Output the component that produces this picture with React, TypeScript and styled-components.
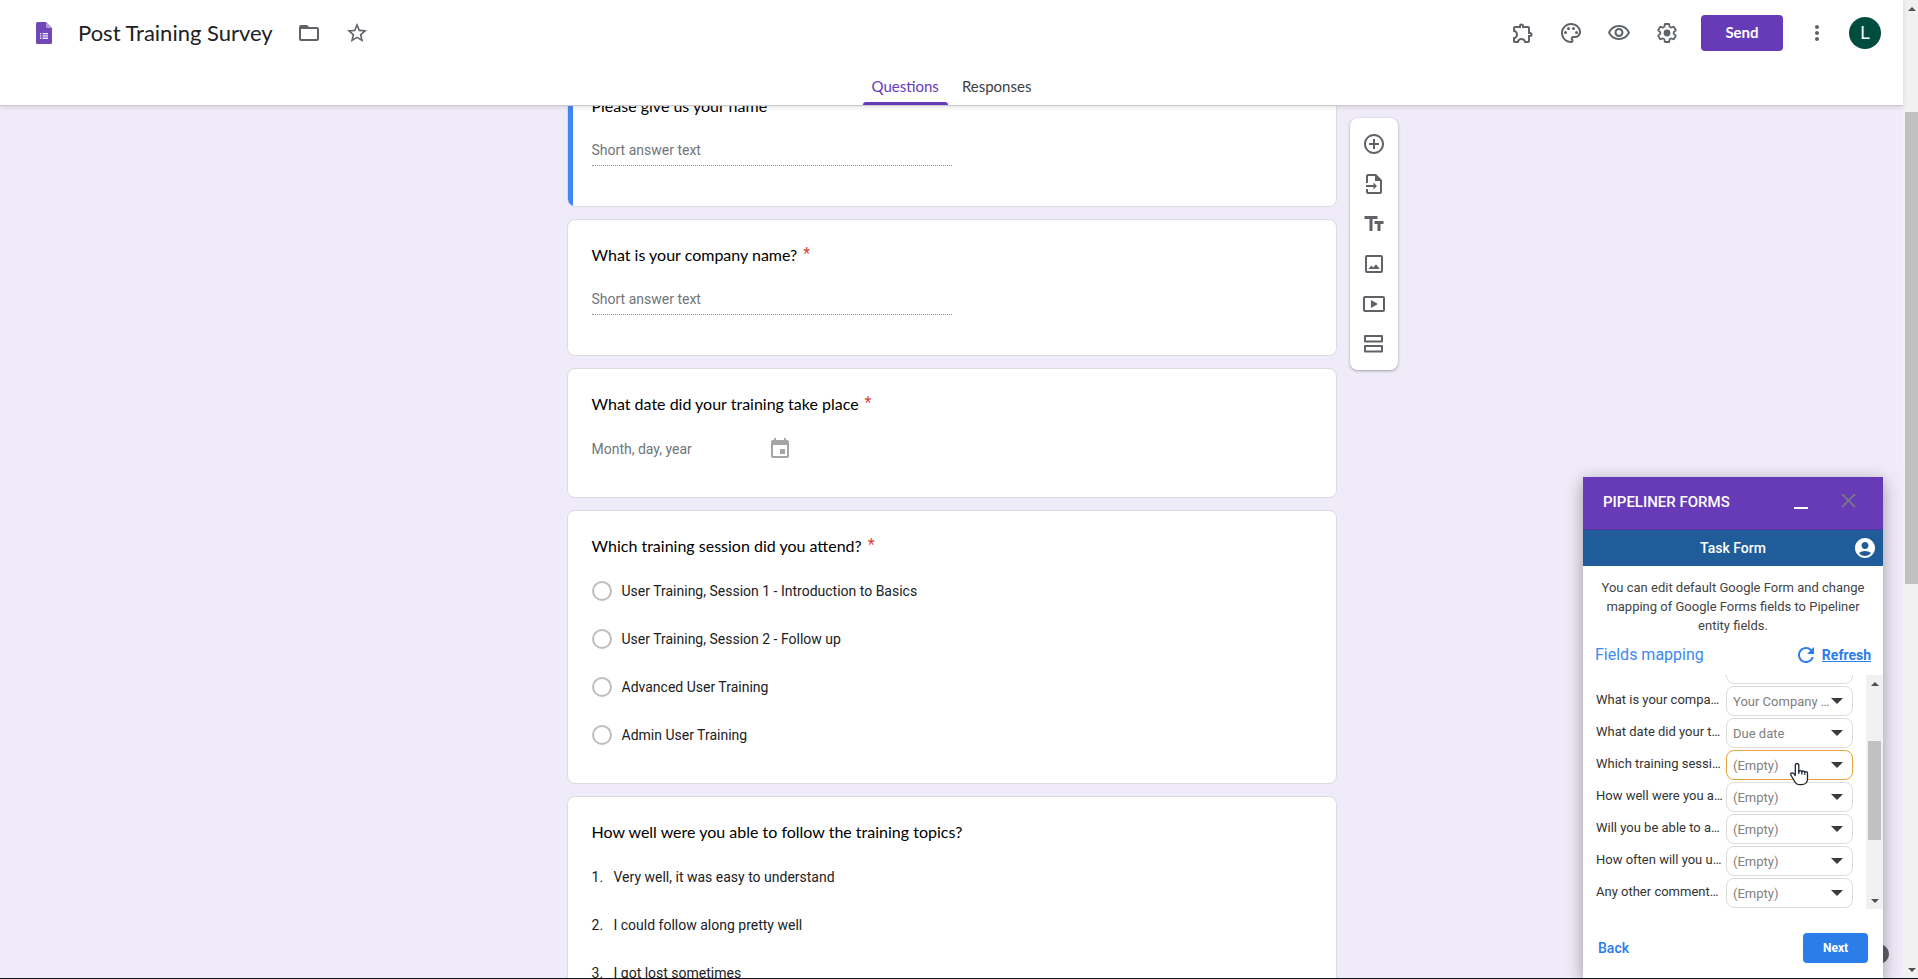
import React from 'react';
import styled, { createGlobalStyle, css } from 'styled-components';
import {
  MdAccountCircle,
  MdAddCircleOutline,
  MdEvent,
  MdFolderOpen,
  MdMoreVert,
  MdOutlineExtension,
  MdOutlinePalette,
  MdOutlineVisibility,
  MdRefresh,
  MdStarBorder,
  MdTextFields,
} from 'react-icons/md';

const display = "Lato, 'Open Sans', sans-serif";
const body = "Roboto, 'Liberation Sans', sans-serif";

const GlobalStyle = createGlobalStyle`
  *, *::before, *::after { box-sizing: border-box; }
  body { margin: 0; background: #f0ebf8; font-family: ${body}; color: #202124; }
  button, input, select { font-family: inherit; }
  h1, h2, h3, p, ol, fieldset { margin: 0; padding: 0; border: 0; }
`;

/* ---------- page shell ---------- */

const Shell = styled.div`
  position: relative;
  display: grid;
  grid-template-columns: minmax(0, 1fr) 15px;
  height: 100vh;
  overflow: hidden;
  border-bottom: 1px solid #10131c;
`;

const Page = styled.div`
  display: flex;
  flex-direction: column;
  min-height: 0;
`;

const Track = styled.div<{ $inset: number }>`
  display: flex;
  flex-direction: column;
  align-items: center;
  background: #f1f1f1;
  padding: 0 0 0 ${(p) => p.$inset}px;
`;

const Arrow = styled.span<{ $down?: boolean }>`
  display: flex;
  align-items: center;
  justify-content: center;
  height: 17px;
  &::before {
    content: '';
    border: 4px solid transparent;
    border-top-width: ${(p) => (p.$down ? 4 : 0)}px;
    border-bottom-width: ${(p) => (p.$down ? 0 : 4)}px;
    ${(p) => (p.$down ? 'border-top-color' : 'border-bottom-color')}: #505050;
  }
`;

const Space = styled.span<{ $grow: number }>`
  flex: ${(p) => p.$grow} 1 0;
`;

const Thumb = styled.span<{ $grow: number }>`
  flex: ${(p) => p.$grow} 1 0;
  width: 13px;
  background: #c1c1c1;
`;

/* ---------- header ---------- */

const Header = styled.header`
  position: relative;
  z-index: 2;
  background: #fff;
  border-bottom: 1px solid #c9c8cf;
  box-shadow: 0 1px 5px rgba(60, 64, 67, 0.16);
`;

const TopRow = styled.div`
  display: flex;
  align-items: center;
  height: 66px;
  padding: 0 22px 0 36px;
`;

const Title = styled.h1`
  font: 400 22px/28px ${display};
  padding: 0 9px 0 26px;
  min-width: 233px;
  white-space: nowrap;
`;

const IconButton = styled.button`
  display: flex;
  align-items: center;
  justify-content: center;
  width: 48px;
  height: 48px;
  padding: 0;
  border: 0;
  background: none;
  color: #5f6368;
  font-size: 24px;
`;

const Actions = styled.div`
  display: flex;
  align-items: center;
  margin-left: auto;
`;

const SendButton = styled.button`
  width: 82px;
  height: 36px;
  margin: 0 10px;
  padding: 0 0 2px;
  border: 0;
  border-radius: 4px;
  background: #673ab7;
  color: #fff;
  font: 700 15px/20px ${display};
`;

const Avatar = styled.button`
  width: 32px;
  height: 32px;
  margin-left: 8px;
  padding: 0;
  border: 0;
  border-radius: 50%;
  background: #004d40;
  color: #fff;
  font: 400 18px/32px ${body};
`;

const Tabs = styled.nav`
  display: flex;
  justify-content: center;
  gap: 5px;
  height: 39px;
`;

const Tab = styled.button<{ $active?: boolean }>`
  position: relative;
  padding: 0 9px;
  border: 0;
  background: none;
  color: ${(p) => (p.$active ? '#673ab7' : '#3c4043')};
  font: 400 15px/20px ${display};
  ${(p) =>
    p.$active &&
    css`
      &::after {
        content: '';
        position: absolute;
        left: 0;
        right: 0;
        bottom: 0;
        height: 3px;
        border-radius: 3px 3px 0 0;
        background: #673ab7;
      }
    `}
`;

/* ---------- form ---------- */

const Scroller = styled.main`
  flex: 1;
  min-height: 0;
  overflow: hidden;
`;

const Columns = styled.div`
  display: grid;
  grid-template-columns: minmax(60px, 1fr) minmax(0, 770px) minmax(60px, 1fr);
  align-items: start;
`;

const CardList = styled.div`
  grid-column: 2;
  display: flex;
  flex-direction: column;
  gap: 12px;
  margin-top: -36px;
`;

const Card = styled.section<{ $active?: boolean }>`
  position: relative;
  padding: 23px 24px 36px;
  border: 1px solid #dadce0;
  border-radius: 8px;
  background: #fff;
  overflow: hidden;
  ${(p) =>
    p.$active &&
    css`
      &::before {
        content: '';
        position: absolute;
        inset: -1px auto -1px -1px;
        width: 6px;
        background: #4285f4;
      }
    `}
`;

const Question = styled.h2`
  font: 400 16px/24px ${display};
  color: #000;
`;

const Star = styled.span`
  padding-left: 6px;
  color: #db4437;
  font: 400 16px/16px ${body};
  vertical-align: 2px;
`;

const ShortAnswer = styled.input`
  display: block;
  width: 360px;
  max-width: 100%;
  height: 28px;
  margin: 20px 0 4px;
  padding: 0 0 4px;
  border: 0;
  border-bottom: 1px dotted #8c8f93;
  background: none;
  font-size: 14px;
  &::placeholder { color: #70757a; opacity: 1; }
`;

const DateRow = styled.div`
  display: flex;
  align-items: center;
  justify-content: space-between;
  width: 200px;
  height: 24px;
  margin-top: 21px;
  svg { font-size: 24px; color: #a5a5a5; }
`;

const DateInput = styled.input`
  width: 130px;
  padding: 0;
  border: 0;
  background: none;
  font-size: 14px;
  &::placeholder { color: #70757a; opacity: 1; }
`;

const Options = styled.fieldset`
  display: flex;
  flex-direction: column;
  gap: 24px;
  padding-top: 21px;
`;

const Option = styled.label`
  display: flex;
  align-items: center;
  gap: 10px;
  height: 24px;
  font-size: 14px;
`;

const Radio = styled.input`
  appearance: none;
  width: 20px;
  height: 20px;
  margin: 0;
  border: 2px solid #bdbdbd;
  border-radius: 50%;
`;

const Ranked = styled.ol`
  display: flex;
  flex-direction: column;
  gap: 24px;
  padding-top: 21px;
  list-style: none;
  counter-reset: rank;
`;

const RankedItem = styled.li`
  display: flex;
  gap: 10px;
  font-size: 14px;
  line-height: 24px;
  counter-increment: rank;
  &::before {
    content: counter(rank) '.';
    width: 12px;
  }
`;

const Toolbar = styled.aside`
  grid-column: 3;
  justify-self: start;
  display: flex;
  flex-direction: column;
  margin: 12px 0 0 13px;
  padding: 6px 0;
  border-radius: 8px;
  background: #fff;
  box-shadow: 0 1px 3px rgba(60, 64, 67, 0.45);
`;

const ToolButton = styled(IconButton)`
  height: 40px;
`;

const Help = styled.button`
  position: absolute;
  right: 29px;
  bottom: 14px;
  width: 20px;
  height: 20px;
  padding: 0;
  border: 0;
  border-radius: 50%;
  background: #5f6368;
`;

/* ---------- add-on panel ---------- */

const Panel = styled.section`
  position: absolute;
  right: 35px;
  bottom: 0;
  z-index: 3;
  display: flex;
  flex-direction: column;
  width: 300px;
  background: #fff;
  box-shadow: 0 4px 16px rgba(0, 0, 0, 0.36);
`;

const PanelHead = styled.div`
  display: flex;
  align-items: center;
  height: 53px;
  padding: 0 26px 2px 20px;
  border-bottom: 1px solid #5a33a3;
  background: #673ab7;
  color: #fff;
`;

const PanelTitle = styled.h2`
  flex: 1;
  font: 500 15px/20px ${body};
`;

const PanelButton = styled.button`
  display: flex;
  padding: 0;
  margin-left: 33px;
  border: 0;
  background: none;
`;

const PanelSub = styled.div`
  display: grid;
  grid-template-columns: 24px 1fr 24px;
  align-items: center;
  height: 36px;
  padding: 0 6px;
  background: #1f5c99;
  color: #fff;
  font: 500 14px/20px ${body};
  text-align: center;
  span { grid-column: 2; }
  svg { font-size: 24px; }
`;

const PanelText = styled.p`
  padding: 12px 16px 0;
  color: #444;
  font-size: 13px;
  line-height: 19px;
  text-align: center;
`;

const MappingHead = styled.div`
  display: flex;
  align-items: center;
  justify-content: space-between;
  height: 40px;
  padding: 0 12px;
`;

const MappingTitle = styled.h3`
  font: 400 16px/20px ${body};
  color: #3b8af0;
`;

const RefreshLink = styled.a`
  display: flex;
  align-items: center;
  gap: 4px;
  color: #2b7de9;
  font: 700 14px/20px ${body};
  text-decoration: none;
  span { text-decoration: underline; }
  svg { font-size: 24px; }
`;

const MappingArea = styled.div`
  display: grid;
  grid-template-columns: minmax(0, 1fr) 17px;
  height: 234px;
`;

const MappingRows = styled.div`
  display: flex;
  flex-direction: column;
  justify-content: flex-end;
  padding: 0 13px;
  min-height: 0;
  overflow: hidden;
`;

const MappingRow = styled.label`
  display: grid;
  grid-template-columns: minmax(0, 1fr) 127px;
  gap: 3px;
  flex: none;
  height: 32px;
  align-items: center;
`;

const MappingLabel = styled.span`
  overflow: hidden;
  padding-bottom: 2px;
  color: #333;
  font-size: 13px;
  line-height: 20px;
  text-overflow: ellipsis;
  white-space: nowrap;
`;

const SelectBox = styled.span`
  position: relative;
  &::after {
    content: '';
    position: absolute;
    top: 12px;
    right: 10px;
    border: 6px solid transparent;
    border-top-color: #3a3a3a;
    border-bottom: 0;
    pointer-events: none;
  }
`;

const Select = styled.select<{ $hot?: boolean }>`
  appearance: none;
  display: block;
  width: 100%;
  height: 30px;
  padding: 0 22px 0 6px;
  border: 1px solid ${(p) => (p.$hot ? '#e6a23c' : '#dcdcdc')};
  border-radius: 8px;
  background: #fff;
  color: #808080;
  font-size: 13px;
  text-overflow: ellipsis;
  overflow: hidden;
  white-space: nowrap;
`;

const Pointer = styled.svg`
  position: absolute;
  left: 64px;
  top: 12px;
  z-index: 1;
`;

const PanelFoot = styled.div`
  display: flex;
  align-items: center;
  justify-content: space-between;
  padding: 24px 15px 15px;
`;

const BackButton = styled.button`
  padding: 0;
  border: 0;
  background: none;
  color: #2b7de9;
  font: 500 14px/20px ${body};
`;

const NextButton = styled.button`
  width: 65px;
  height: 30px;
  border: 0;
  border-radius: 4px;
  background: #2b7de9;
  color: #fff;
  font: 700 12px/20px ${body};
`;

/* ---------- drawings ---------- */

const FormsLogo = () => (
  <svg width="16" height="22" viewBox="0 0 16 22" aria-hidden="true">
    <path d="M1.5 0H10l6 6v14.5a1.5 1.5 0 0 1-1.5 1.5h-13A1.5 1.5 0 0 1 0 20.5v-19A1.5 1.5 0 0 1 1.5 0z" fill="#7248b9" />
    <path d="M10 0l6 6h-4.5A1.5 1.5 0 0 1 10 4.5z" fill="#b39ddb" />
    <path d="M4 11h1.3v1.3H4zM4 13.3h1.3v1.3H4zM4 15.6h1.3v1.3H4zM6.5 11H12v1.3H6.5zM6.5 13.3H12v1.3H6.5zM6.5 15.6H12v1.3H6.5z" fill="#f1ebfa" />
  </svg>
);

const Gear = () => (
  <svg width="24" height="24" viewBox="0 0 24 24" aria-hidden="true">
    <path
      d="M19.43 12.98c.04-.32.07-.64.07-.98 0-.34-.03-.66-.07-.98l2.11-1.65c.19-.15.24-.42.12-.64l-2-3.46a.5.5 0 0 0-.61-.22l-2.49 1c-.52-.4-1.08-.73-1.69-.98l-.38-2.65A.488.488 0 0 0 14 2h-4c-.25 0-.46.18-.49.42l-.38 2.65c-.61.25-1.17.59-1.69.98l-2.49-1a.566.566 0 0 0-.18-.03c-.17 0-.34.09-.43.25l-2 3.46c-.13.22-.07.49.12.64l2.11 1.65c-.04.32-.07.65-.07.98s.03.66.07.98l-2.11 1.65c-.19.15-.24.42-.12.64l2 3.46a.5.5 0 0 0 .61.22l2.49-1c.52.4 1.08.73 1.69.98l.38 2.65c.03.24.24.42.49.42h4c.25 0 .46-.18.49-.42l.38-2.65c.61-.25 1.17-.59 1.69-.98l2.49 1c.06.02.12.03.18.03.17 0 .34-.09.43-.25l2-3.46c.12-.22.07-.49-.12-.64l-2.11-1.65z"
      transform="translate(1.2 1.2) scale(0.9)"
      fill="none"
      stroke="currentColor"
      strokeWidth="2"
      strokeLinejoin="round"
    />
    <circle cx="12" cy="12" r="3.4" fill="currentColor" />
  </svg>
);

const ImportIcon = () => (
  <svg width="24" height="24" viewBox="0 0 24 24" fill="currentColor" aria-hidden="true">
    <path d="M14 2H6a2 2 0 0 0-2 2v7h2V4h7v5h5v11H6v-3H4v3a2 2 0 0 0 2 2h12a2 2 0 0 0 2-2V8z" />
    <path d="M11.5 10.5v2.5H4v2h7.5v2.5L15 14z" />
  </svg>
);

const ImageIcon = () => (
  <svg width="24" height="24" viewBox="0 0 24 24" fill="currentColor" aria-hidden="true">
    <path d="M19 3H5a2 2 0 0 0-2 2v14a2 2 0 0 0 2 2h14a2 2 0 0 0 2-2V5a2 2 0 0 0-2-2zm0 16H5V5h14z" />
    <path d="M6.5 17l2.8-3.500 2 2 2.7-3.300L17.8 17z" />
  </svg>
);

const VideoIcon = () => (
  <svg width="24" height="24" viewBox="0 0 24 24" fill="currentColor" aria-hidden="true">
    <path d="M21 4H3a2 2 0 0 0-2 2v12a2 2 0 0 0 2 2h18a2 2 0 0 0 2-2V6a2 2 0 0 0-2-2zm0 14H3V6h18z" />
    <path d="M9 8v8l7-4z" />
  </svg>
);

const SectionIcon = () => (
  <svg width="24" height="24" viewBox="0 0 24 24" fill="none" stroke="currentColor" strokeWidth="2" strokeLinejoin="round" aria-hidden="true">
    <path d="M3 4h17v5.5H3zM3 14h17v5.5H3z" />
  </svg>
);

const HandPointer = () => (
  <Pointer width="20" height="24" viewBox="0 0 20 24" aria-hidden="true">
    <path
      d="M7 1.5c-1 0-1.7.7-1.7 1.7v10.3L3.8 11.7c-.8-.9-2-1-2.7-.4-.5.5-.5 1.2-.1 1.9l3.7 6.3c1 2 2.6 3.2 5.3 3.2h1.5c3.5 0 6-2.4 6-5.8v-5.7c0-.9-.6-1.5-1.4-1.5-.7 0-1.3.5-1.3 1.2 0-1.1-.6-1.9-1.5-1.9s-1.5.6-1.5 1.4c0-1-.6-1.8-1.5-1.8s-1.5.6-1.5 1.4V3.2C8.800 2.200 8 1.500 7 1.500z"
      fill="#fff" stroke="#1d2433" strokeWidth="1.3" strokeLinejoin="round"
    />
    <path d="M8.8 9v3M11.8 10.5v2M14.8 11.5v1.5" stroke="#1d2433" strokeWidth="1.2" />
  </Pointer>
);

/* ---------- data ---------- */

const sessions = [
  'User Training, Session 1 - Introduction to Basics',
  'User Training, Session 2 - Follow up',
  'Advanced User Training',
  'Admin User Training',
];

const ranks = ['Very well, it was easy to understand', 'I could follow along pretty well', 'I got lost sometimes'];

const mappings = [
  { label: 'Please give us your name', value: '' },
  { label: 'What is your company name?', value: 'Your Company Name' },
  { label: 'What date did your training take place', value: 'Due date' },
  { label: 'Which training session did you attend?', value: '(Empty)', hot: true },
  { label: 'How well were you able to follow the training topics?', value: '(Empty)' },
  { label: 'Will you be able to apply the training?', value: '(Empty)' },
  { label: 'How often will you use the system?', value: '(Empty)' },
  { label: 'Any other comments or suggestions?', value: '(Empty)' },
];

const Required = () => <Star>*</Star>;

export default function App() {
  return (
    <Shell>
      <GlobalStyle />
      <Page>
        <Header>
          <TopRow>
            <FormsLogo />
            <Title>Post Training Survey</Title>
            <IconButton aria-label="Move to folder"><MdFolderOpen /></IconButton>
            <IconButton aria-label="Star"><MdStarBorder /></IconButton>
            <Actions>
              <IconButton aria-label="Add-ons"><MdOutlineExtension /></IconButton>
              <IconButton aria-label="Customize theme"><MdOutlinePalette /></IconButton>
              <IconButton aria-label="Preview"><MdOutlineVisibility /></IconButton>
              <IconButton aria-label="Settings"><Gear /></IconButton>
              <SendButton>Send</SendButton>
              <IconButton aria-label="More"><MdMoreVert /></IconButton>
              <Avatar>L</Avatar>
            </Actions>
          </TopRow>
          <Tabs>
            <Tab $active>Questions</Tab>
            <Tab>Responses</Tab>
          </Tabs>
        </Header>

        <Scroller>
          <Columns>
            <CardList>
              <Card $active>
                <Question>Please give us your name</Question>
                <ShortAnswer aria-label="Please give us your name" placeholder="Short answer text" />
              </Card>
              <Card>
                <Question>What is your company name?<Required /></Question>
                <ShortAnswer aria-label="What is your company name?" placeholder="Short answer text" />
              </Card>
              <Card>
                <Question>What date did your training take place<Required /></Question>
                <DateRow>
                  <DateInput aria-label="Training date" placeholder="Month, day, year" />
                  <MdEvent />
                </DateRow>
              </Card>
              <Card>
                <Question>Which training session did you attend?<Required /></Question>
                <Options aria-label="Which training session did you attend?">
                  {sessions.map((s) => (
                    <Option key={s}>
                      <Radio type="radio" name="session" />
                      {s}
                    </Option>
                  ))}
                </Options>
              </Card>
              <Card>
                <Question>How well were you able to follow the training topics?</Question>
                <Ranked>
                  {ranks.map((r) => (
                    <RankedItem key={r}>{r}</RankedItem>
                  ))}
                </Ranked>
              </Card>
            </CardList>
            <Toolbar>
              <ToolButton aria-label="Add question"><MdAddCircleOutline /></ToolButton>
              <ToolButton aria-label="Import questions"><ImportIcon /></ToolButton>
              <ToolButton aria-label="Add title and description"><MdTextFields /></ToolButton>
              <ToolButton aria-label="Add image"><ImageIcon /></ToolButton>
              <ToolButton aria-label="Add video"><VideoIcon /></ToolButton>
              <ToolButton aria-label="Add section"><SectionIcon /></ToolButton>
            </Toolbar>
          </Columns>
        </Scroller>
      </Page>

      <Track $inset={2}>
        <Arrow />
        <Space $grow={95} />
        <Thumb $grow={472} />
        <Space $grow={377} />
        <Arrow $down />
      </Track>

      <Help aria-label="Help" />

      <Panel>
        <PanelHead>
          <PanelTitle>PIPELINER FORMS</PanelTitle>
          <PanelButton aria-label="Minimize">
            <svg width="14" height="16" viewBox="0 0 14 16"><path d="M0 13h14v2H0z" fill="#fff" /></svg>
          </PanelButton>
          <PanelButton aria-label="Close">
            <svg width="16" height="16" viewBox="0 0 16 16"><path d="M1 0l13 13M14 0L1 13" stroke="#77728a" strokeWidth="2" /></svg>
          </PanelButton>
        </PanelHead>
        <PanelSub>
          <span>Task Form</span>
          <MdAccountCircle />
        </PanelSub>
        <PanelText>
          You can edit default Google Form and change mapping of Google Forms fields to Pipeliner entity fields.
        </PanelText>
        <MappingHead>
          <MappingTitle>Fields mapping</MappingTitle>
          <RefreshLink href="#refresh">
            <MdRefresh />
            <span>Refresh</span>
          </RefreshLink>
        </MappingHead>
        <MappingArea>
          <MappingRows>
            {mappings.map((m) => (
              <MappingRow key={m.label}>
                <MappingLabel>{m.label}</MappingLabel>
                <SelectBox>
                  <Select $hot={m.hot}>
                    <option>{m.value}</option>
                  </Select>
                  {m.hot && <HandPointer />}
                </SelectBox>
              </MappingRow>
            ))}
          </MappingRows>
          <Track $inset={0}>
            <Arrow />
            <Space $grow={49} />
            <Thumb $grow={99} />
            <Space $grow={52} />
            <Arrow $down />
          </Track>
        </MappingArea>
        <PanelFoot>
          <BackButton>Back</BackButton>
          <NextButton>Next</NextButton>
        </PanelFoot>
      </Panel>
    </Shell>
  );
}
